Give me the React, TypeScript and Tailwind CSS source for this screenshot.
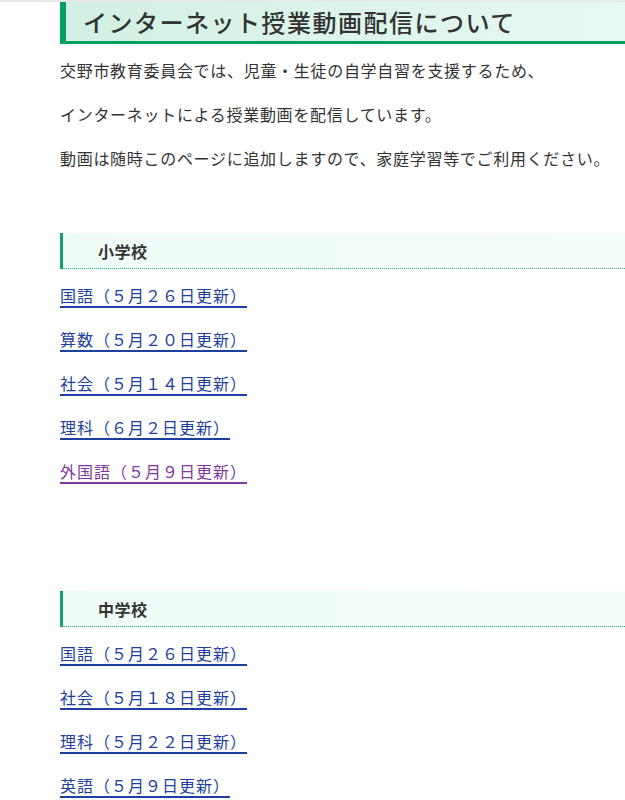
const elementary = [
  { label: "国語（５月２６日更新）", visited: false },
  { label: "算数（５月２０日更新）", visited: false },
  { label: "社会（５月１４日更新）", visited: false },
  { label: "理科（６月２日更新）", visited: false },
  { label: "外国語（５月９日更新）", visited: true },
];

const junior = [
  { label: "国語（５月２６日更新）", visited: false },
  { label: "社会（５月１８日更新）", visited: false },
  { label: "理科（５月２２日更新）", visited: false },
  { label: "英語（５月９日更新）", visited: false },
];

function SubHeading({ title }: { title: string }) {
  return (
    <div className="flex h-[36px]">
      <div className="w-[3px] bg-[#12a466]" />
      <div className="flex flex-1 items-center border-b border-dotted border-[#34b386] bg-linear-to-r from-[#eefcf7] to-[#f5fdfb] pl-[35px] text-[16px] font-bold tracking-[0.5px] text-[#333]">
        {title}
      </div>
    </div>
  );
}

function LinkList({ items }: { items: { label: string; visited: boolean }[] }) {
  return (
    <ul className="flex flex-col gap-4">
      {items.map((item) => (
        <li key={item.label} className="leading-[28px]">
          <a
            href="#"
            className={`text-[16px] tracking-[1px] underline decoration-2 underline-offset-[4px] ${
              item.visited ? "text-[#80389c]" : "text-[#1d3f9d]"
            }`}
          >
            {item.label}
          </a>
        </li>
      ))}
    </ul>
  );
}

export default function App() {
  return (
    <div className="min-h-screen border-t-2 border-[#e8e8e8] bg-white font-['Noto_Sans_CJK_JP','Noto_Sans',sans-serif] text-[#333]">
      <div className="pl-[60px]">
        <h1 className="flex h-[42px] items-center border-b-[3px] border-l-[6px] border-[#00a15f] bg-linear-to-r from-[#d2f0e4] to-[#e8f8f2] pl-[17px] text-[24px] font-medium tracking-[1.5px] text-[#333]">
          インターネット授業動画配信について
        </h1>

        <div className="mt-[12px] flex flex-col gap-4 text-[16px] leading-[28px] tracking-[0.7px]">
          <p>交野市教育委員会では、児童・生徒の自学自習を支援するため、</p>
          <p>インターネットによる授業動画を配信しています。</p>
          <p>動画は随時このページに追加しますので、家庭学習等でご利用ください。</p>
        </div>

        <div className="mt-[61px]">
          <SubHeading title="小学校" />
        </div>
        <div className="mt-[12px]">
          <LinkList items={elementary} />
        </div>

        <div className="mt-[106px]">
          <SubHeading title="中学校" />
        </div>
        <div className="mt-[12px]">
          <LinkList items={junior} />
        </div>
      </div>
    </div>
  );
}
